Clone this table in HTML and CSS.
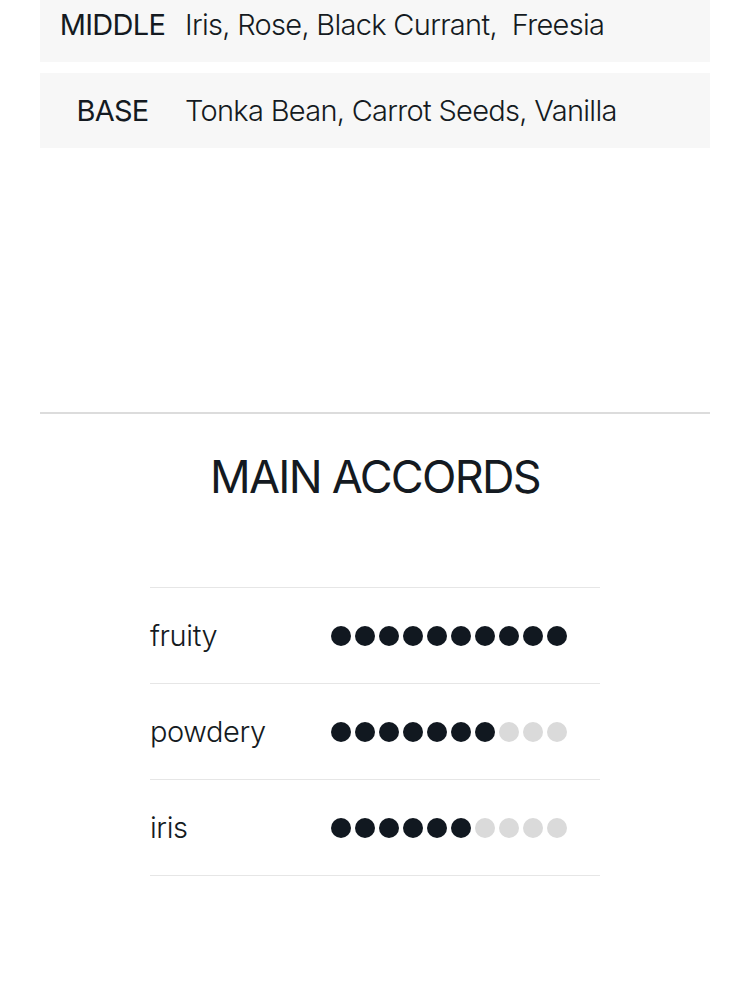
FILE: index.html
```html
<!DOCTYPE html>
<html>
<head>
<meta charset="utf-8">
<link rel="stylesheet" href="styles.css">
</head>
<body>
<div class="page">
  <div class="notes">
    <div class="note-row">
      <div class="note-label">MIDDLE</div>
      <div class="note-value">Iris, Rose, Black Currant,&nbsp; Freesia</div>
    </div>
    <div class="note-row">
      <div class="note-label">BASE</div>
      <div class="note-value">Tonka Bean, Carrot Seeds, Vanilla</div>
    </div>
  </div>
  <hr class="divider">
  <h2 class="title">MAIN ACCORDS</h2>
  <div class="accords">
    <div class="accord">
      <div class="accord-name">fruity</div>
      <div class="dots">
        <span class="dot on"></span><span class="dot on"></span><span class="dot on"></span><span class="dot on"></span><span class="dot on"></span><span class="dot on"></span><span class="dot on"></span><span class="dot on"></span><span class="dot on"></span><span class="dot on"></span>
      </div>
    </div>
    <div class="accord">
      <div class="accord-name">powdery</div>
      <div class="dots">
        <span class="dot on"></span><span class="dot on"></span><span class="dot on"></span><span class="dot on"></span><span class="dot on"></span><span class="dot on"></span><span class="dot on"></span><span class="dot"></span><span class="dot"></span><span class="dot"></span>
      </div>
    </div>
    <div class="accord">
      <div class="accord-name">iris</div>
      <div class="dots">
        <span class="dot on"></span><span class="dot on"></span><span class="dot on"></span><span class="dot on"></span><span class="dot on"></span><span class="dot on"></span><span class="dot"></span><span class="dot"></span><span class="dot"></span><span class="dot"></span>
      </div>
    </div>
  </div>
</div>
</body>
</html>
```

FILE: styles.css
```css
html, body {
  margin: 0;
  padding: 0;
  background: #ffffff;
}
body {
  font-family: Inter, "Noto Sans", sans-serif;
  color: #141a21;
  font-weight: 300;
}
.page {
  padding: 0 40px;
}
.notes {
  margin-top: -13px;
  display: flex;
  flex-direction: column;
  gap: 11px;
}
.note-row {
  background: #f7f7f7;
  height: 75px;
  display: flex;
  align-items: center;
}
.note-label {
  width: 145px;
  text-align: center;
  font-size: 29px;
  letter-spacing: -0.7px;
  font-weight: 400;
}
.note-value {
  font-size: 29px;
  letter-spacing: -0.7px;
}
.divider {
  margin: 264px 0 0;
  border: 0;
  height: 2px;
  background: #dcdcdc;
}
.title {
  margin: 37px 0 0;
  text-align: center;
  font-size: 45px;
  letter-spacing: -1.7px;
  font-weight: 400;
  line-height: 52px;
}
.accords {
  width: 450px;
  margin: 84px auto 0;
  border-top: 1px solid #e6e6e6;
}
.accord {
  height: 95px;
  border-bottom: 1px solid #e6e6e6;
  display: flex;
  align-items: center;
}
.accord-name {
  width: 181px;
  font-size: 29px;
  letter-spacing: -0.4px;
}
.dots {
  display: flex;
  gap: 4px;
}
.dot {
  width: 20px;
  height: 20px;
  border-radius: 50%;
  background: #dadada;
}
.dot.on {
  background: #111820;
}
```
